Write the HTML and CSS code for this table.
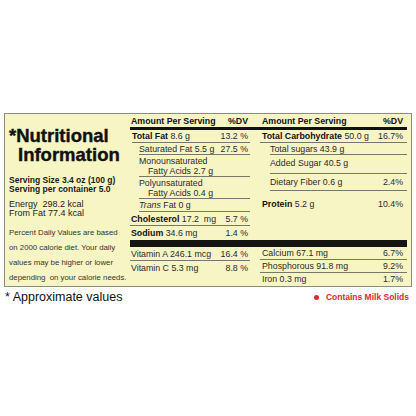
FILE: index.html
```html
<!DOCTYPE html>
<html lang="en">
<head>
  <meta charset="UTF-8">
  <title>Nutritional Information</title>
  <link rel="stylesheet" href="styles.css">
</head>
<body>
  <div class="page">
    <!-- Таблица пищевой ценности -->
    <div class="panel">
      <div class="intro">
        <h1>*Nutritional<br><span class="indent">Information</span></h1>
        <p class="serving">Serving Size 3.4 oz (100 g)<br>Serving per container 5.0</p>
        <p class="energy">Energy&nbsp; 298.2 kcal<br>From Fat 77.4 kcal</p>
        <p class="note">Percent Daily Values are based<br>on 2000 calorie diet. Your daily<br>values may be higher or lower<br>depending&nbsp; on your calorie needs.</p>
      </div>

      <div class="facts">
        <div class="head"><b>Amount Per Serving</b><b>%DV</b></div>
        <div class="head right"><b>Amount Per Serving</b><b>%DV</b></div>
        <div class="rule"></div>

        <div class="list">
          <div class="row h13 main"><span><b>Total Fat</b> 8.6 g</span><span>13.2 %</span></div>
          <div class="row h12 sub"><span>Saturated Fat 5.5 g</span><span>27.5 %</span></div>
          <div class="row h22 sub"><span>Monounsaturated<br><span class="indent2">Fatty Acids 2.7 g</span></span></div>
          <div class="row h22 sub"><span>Polyunsaturated<br><span class="indent2">Fatty Acids 0.4 g</span></span></div>
          <div class="row h13 sub"><span><i>Trans</i> Fat 0 g</span></div>
          <div class="row h14"><span><b>Cholesterol</b> 17.2&nbsp; mg</span><span>5.7 %</span></div>
          <div class="row h13 last"><span><b>Sodium</b> 34.6 mg</span><span>1.4 %</span></div>
        </div>

        <div class="list right">
          <div class="row h13"><span><b>Total Carbohydrate</b> 50.0 g</span><span>16.7%</span></div>
          <div class="row h12 sub"><span>Total sugars 43.9 g</span></div>
          <div class="row h19 sub top"><span>Added Sugar 40.5 g</span></div>
          <div class="row h17 sub"><span>Dietary Fiber 0.6 g</span><span>2.4%</span></div>
          <div class="row h21 last low"><span><b>Protein</b> 5.2 g</span><span>10.4%</span></div>
        </div>

        <div class="bar"></div>

        <div class="list">
          <div class="row h14"><span>Vitamin A 246.1 mcg</span><span>16.4 %</span></div>
          <div class="row h14 last"><span>Vitamin C 5.3 mg</span><span>8.8 %</span></div>
        </div>

        <div class="list right">
          <div class="row h13"><span>Calcium 67.1 mg</span><span>6.7%</span></div>
          <div class="row h13"><span>Phosphorous 91.8 mg</span><span>9.2%</span></div>
          <div class="row h12 last"><span>Iron 0.3 mg</span><span>1.7%</span></div>
        </div>
      </div>
    </div>

    <!-- Примечания под таблицей -->
    <div class="footer">
      <span class="approx">* Approximate values</span>
      <span class="milk"><span class="dot"></span>Contains Milk Solids</span>
    </div>
  </div>
</body>
</html>
```

FILE: styles.css
```css
/* Базовые стили */
* { box-sizing: border-box; }
html, body {
  margin: 0; padding: 0;
  background: #fff;
}
body {
  font-family: "Liberation Sans", Arial, sans-serif;
  color: #222;
}
.page {
  padding: 113px 4px 0 4px;
}
/* Жёлтая панель */
.panel {
  display: grid;
  grid-template-columns: 125px 1fr;
  height: 174px;
  background: #f8f5c5;
  border: 1px solid #8c8c80;
}
.intro {
  padding: 12px 0 0 4px;
  white-space: nowrap;
}
.intro h1 {
  margin: 0;
  font-size: 18.5px;
  line-height: 19px;
  font-weight: bold;
  color: #111;
  -webkit-text-stroke: 0.4px #111;
}
.intro .indent { padding-left: 9px; }
.intro p { margin: 0; }
.serving {
  margin-top: 12px !important;
  font-size: 8.5px;
  line-height: 9px;
  font-weight: bold;
  color: #1a1a1a;
}
.energy {
  margin-top: 6px !important;
  font-size: 9px;
  line-height: 9px;
}
.note {
  margin-top: 7px !important;
  font-size: 7.8px;
  line-height: 15px;
  color: #333;
}
/* Таблица значений */
.facts {
  display: grid;
  grid-template-columns: 120px 1fr;
  grid-template-rows: auto auto 110px auto 1fr;
  column-gap: 10px;
  align-content: start;
  padding: 2px 4px 0 0;
  font-size: 8.8px;
}
.head {
  display: flex;
  justify-content: space-between;
  font-size: 8.8px;
  padding: 0 2px 0 1px;
  height: 10px;
  line-height: 10px;
  color: #111;
}
.head.right { padding-right: 4px; padding-left: 2px; }
.rule {
  grid-column: 1 / 3;
  height: 3px;
  background: #111;
  margin-top: 1px;
}
.bar {
  grid-column: 1 / 3;
  height: 7px;
  background: #151515;
}
.list { display: flex; flex-direction: column; }
.row {
  display: flex;
  justify-content: space-between;
  align-items: center;
  border-bottom: 1px solid #77776a;
  padding: 0 2px 0 1px;
  line-height: 10px;
  color: #2a2a2a;
}
.row b { color: #111; }
.list.right .row { padding-left: 2px; padding-right: 4px; }
.row.main { margin-left: 2px; padding-left: 0; }
.row.sub { margin-left: 9px; padding-left: 0; }
.list.right .row.sub { margin-left: 10px; padding-left: 0; }
.row.top { align-items: flex-start; padding-top: 3px; }
.row.low { align-items: flex-start; padding-top: 8px; }
.row.last { border-bottom: none; }
.indent2 { padding-left: 9px; }
.h12 { height: 12px; }
.h13 { height: 13px; }
.h14 { height: 14px; }
.h17 { height: 17px; }
.h19 { height: 19px; }
.h21 { height: 21px; }
.h22 { height: 22px; }
/* Подвал */
.footer {
  display: flex;
  justify-content: space-between;
  align-items: center;
  padding: 3px 3px 0 1px;
}
.approx {
  font-size: 12.5px;
  color: #111;
}
.milk {
  display: flex;
  align-items: center;
  gap: 7px;
  font-size: 8.5px;
  font-weight: bold;
  color: #e3262f;
}
.dot {
  width: 5px; height: 5px;
  border-radius: 50%;
  background: #e3262f;
}
```
